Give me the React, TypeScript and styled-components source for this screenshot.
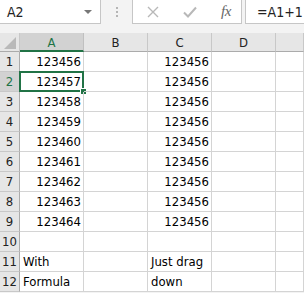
import React from "react";
import styled, { createGlobalStyle } from "styled-components";

const Global = createGlobalStyle`
  html, body { margin: 0; padding: 0; background: #ffffff; }
  body { font-family: "DejaVu Sans", "Liberation Sans", sans-serif; overflow: hidden; }
`;

const FONT = `"DejaVu Sans", "Liberation Sans", sans-serif`;

const Page = styled.div`
  width: 304px;
  height: 293px;
  background: #f3f3f3;
  display: flex;
  flex-direction: column;
  overflow: hidden;
`;

const FormulaBar = styled.div`
  display: flex;
  height: 24px;
  align-items: stretch;
`;

const NameBox = styled.div`
  width: 101px;
  box-sizing: border-box;
  background: #fff;
  border-right: 1px solid #c6c6c6;
  border-bottom: 1px solid #c6c6c6;
  display: flex;
  align-items: center;
  justify-content: space-between;
  padding: 0 8px 0 7px;
  font: 14px ${FONT};
  font-stretch: condensed;
  color: #222;
`;

const Caret = styled.span`
  width: 0;
  height: 0;
  border-left: 4px solid transparent;
  border-right: 4px solid transparent;
  border-top: 4px solid #777;
  margin-top: 1px;
`;

const Grip = styled.div`
  width: 31px;
  display: flex;
  justify-content: center;
  align-items: center;
`;

const Dots = styled.div`
  display: flex;
  flex-direction: column;
  gap: 2px;
  & span { width: 2px; height: 2px; background: #b5b5b5; display: block; }
`;

const ButtonBox = styled.div`
  width: 110px;
  box-sizing: border-box;
  background: #fff;
  border-left: 1px solid #c6c6c6;
  border-right: 1px solid #c6c6c6;
  border-bottom: 1px solid #c6c6c6;
  display: flex;
  align-items: center;
  padding-left: 14px;
`;

const IconSlot = styled.div<{ $w: number }>`
  width: ${(p) => p.$w}px;
  display: flex;
  align-items: center;
  justify-content: flex-start;
`;

const Fx = styled.span`
  font-family: "Liberation Serif", serif;
  font-style: italic;
  font-size: 15px;
  color: #666;
  letter-spacing: -0.5px;
`;

const FormulaInput = styled.div`
  flex: 1;
  margin-left: 3px;
  background: #fff;
  border-left: 1px solid #c6c6c6;
  border-bottom: 1px solid #c6c6c6;
  display: flex;
  align-items: center;
  padding-left: 11px;
  font: 14px ${FONT};
  font-stretch: condensed;
  color: #222;
`;

const Spacer = styled.div`
  height: 9px;
`;

const Grid = styled.div`
  display: grid;
  grid-template-columns: 20px 64px 64px 64px 64px 1fr;
  grid-auto-rows: 20px;
  grid-template-rows: 19px;
  background: #fff;
  font: 13px ${FONT};
  font-stretch: condensed;
`;

const Corner = styled.div`
  background: #e6e6e6;
  border-right: 1px solid #c8c8c8;
  border-bottom: 1px solid #ababab;
  box-sizing: border-box;
  position: relative;
  &::after {
    content: "";
    position: absolute;
    right: 3px;
    bottom: 2px;
    width: 0;
    height: 0;
    border-left: 12px solid transparent;
    border-bottom: 12px solid #b9b9b9;
  }
`;

const ColHead = styled.div<{ $sel?: boolean }>`
  box-sizing: border-box;
  background: ${(p) => (p.$sel ? "#d2d2d2" : "#e6e6e6")};
  color: ${(p) => (p.$sel ? "#217346" : "#222")};
  border-right: 1px solid ${(p) => (p.$sel ? "#c0c0c0" : "#c8c8c8")};
  border-bottom: ${(p) => (p.$sel ? "2px solid #217346" : "1px solid #ababab")};
  display: flex;
  align-items: center;
  justify-content: center;
  padding-top: ${(p) => (p.$sel ? "1px" : "0")};
`;

const RowHead = styled.div<{ $sel?: boolean }>`
  box-sizing: border-box;
  background: ${(p) => (p.$sel ? "#d2d2d2" : "#e6e6e6")};
  color: ${(p) => (p.$sel ? "#217346" : "#222")};
  border-right: 1px solid #ababab;
  border-bottom: 1px solid #c8c8c8;
  display: flex;
  align-items: center;
  justify-content: center;
`;

const Cell = styled.div<{ $align?: "left" | "right" }>`
  box-sizing: border-box;
  border-right: 1px solid #d4d4d4;
  border-bottom: 1px solid #d4d4d4;
  display: flex;
  align-items: center;
  justify-content: ${(p) => (p.$align === "right" ? "flex-end" : "flex-start")};
  padding: 0 2px 0 3px;
  color: #000;
  white-space: nowrap;
  position: relative;
`;

const Selection = styled.div`
  position: absolute;
  left: -1px;
  top: -1px;
  right: -1px;
  bottom: -1px;
  border: 2px solid #217346;
  pointer-events: none;
  &::after {
    content: "";
    position: absolute;
    right: -5px;
    bottom: -5px;
    width: 5px;
    height: 5px;
    background: #217346;
    border: 1px solid #fff;
  }
`;

const cols = ["A", "B", "C", "D", ""];

type Row = { n: number; a?: string; c?: string };
const rows: Row[] = [
  { n: 1, a: "123456", c: "123456" },
  { n: 2, a: "123457", c: "123456" },
  { n: 3, a: "123458", c: "123456" },
  { n: 4, a: "123459", c: "123456" },
  { n: 5, a: "123460", c: "123456" },
  { n: 6, a: "123461", c: "123456" },
  { n: 7, a: "123462", c: "123456" },
  { n: 8, a: "123463", c: "123456" },
  { n: 9, a: "123464", c: "123456" },
  { n: 10 },
  { n: 11, a: "With", c: "Just drag" },
  { n: 12, a: "Formula", c: "down" },
];

const isNum = (s?: string) => !!s && /^\d+$/.test(s);

export default function App() {
  return (
    <>
      <Global />
      <Page>
        <FormulaBar>
          <NameBox>
            <span>A2</span>
            <Caret />
          </NameBox>
          <Grip>
            <Dots>
              <span />
              <span />
              <span />
            </Dots>
          </Grip>
          <ButtonBox>
            <IconSlot $w={36}>
              <svg width="12" height="12" viewBox="0 0 12 12">
                <path d="M1 1 L11 11 M11 1 L1 11" stroke="#b8b8b8" strokeWidth="1.4" fill="none" />
              </svg>
            </IconSlot>
            <IconSlot $w={38}>
              <svg width="14" height="12" viewBox="0 0 14 12">
                <path d="M1 6.5 L5 10.5 L13 1.5" stroke="#b8b8b8" strokeWidth="2" fill="none" />
              </svg>
            </IconSlot>
            <IconSlot $w={20}>
              <Fx>fx</Fx>
            </IconSlot>
          </ButtonBox>
          <FormulaInput>=A1+1</FormulaInput>
        </FormulaBar>
        <Spacer />
        <Grid>
          <Corner />
          {cols.map((c, i) => (
            <ColHead key={i} $sel={c === "A"}>
              {c}
            </ColHead>
          ))}
          {rows.map((r) => (
            <React.Fragment key={r.n}>
              <RowHead $sel={r.n === 2}>{r.n}</RowHead>
              <Cell $align={isNum(r.a) ? "right" : "left"}>
                {r.a}
                {r.n === 2 && <Selection />}
              </Cell>
              <Cell />
              <Cell $align={isNum(r.c) ? "right" : "left"}>{r.c}</Cell>
              <Cell />
              <Cell />
            </React.Fragment>
          ))}
        </Grid>
      </Page>
    </>
  );
}
